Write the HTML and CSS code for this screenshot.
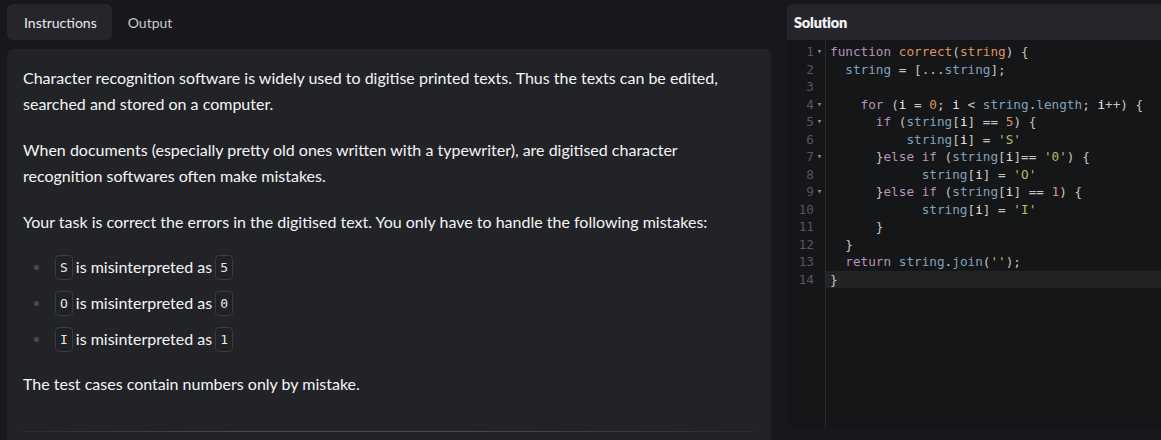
FILE: index.html
```html
<!DOCTYPE html>
<html>
<head>
<meta charset="utf-8">
<link rel="stylesheet" href="styles.css">
</head>
<body>
<div class="app">
  <section class="left">
    <nav class="tabs">
      <span class="tab active">Instructions</span>
      <span class="tab">Output</span>
    </nav>
    <article class="panel">
      <p>Character recognition software is widely used to digitise printed texts. Thus the texts can be edited, searched and stored on a computer.</p>
      <p>When documents (especially pretty old ones written with a typewriter), are digitised character recognition softwares often make mistakes.</p>
      <p>Your task is correct the errors in the digitised text. You only have to handle the following mistakes:</p>
      <ul>
        <li><code>S</code> is misinterpreted as <code>5</code></li>
        <li><code>O</code> is misinterpreted as <code>0</code></li>
        <li><code>I</code> is misinterpreted as <code>1</code></li>
      </ul>
      <p>The test cases contain numbers only by mistake.</p>
      <div class="rule"></div>
    </article>
  </section>
  <section class="right">
    <header class="sol-head">Solution</header>
    <div class="editor">
      <div class="gutter">
        <div class="ln">1<i class="fold">▾</i></div>
        <div class="ln">2<i></i></div>
        <div class="ln">3<i></i></div>
        <div class="ln">4<i class="fold">▾</i></div>
        <div class="ln">5<i class="fold">▾</i></div>
        <div class="ln">6<i></i></div>
        <div class="ln">7<i class="fold">▾</i></div>
        <div class="ln">8<i></i></div>
        <div class="ln">9<i class="fold">▾</i></div>
        <div class="ln">10<i></i></div>
        <div class="ln">11<i></i></div>
        <div class="ln">12<i></i></div>
        <div class="ln">13<i></i></div>
        <div class="ln">14<i></i></div>
      </div>
      <div class="code">
        <div class="cl"><span class="kw">function</span> <span class="fn">correct</span><span class="p">(</span><span class="fn">string</span><span class="p">) {</span></div>
        <div class="cl">  <span class="v">string</span> <span class="p">= [...</span><span class="v">string</span><span class="p">];</span></div>
        <div class="cl"> </div>
        <div class="cl">    <span class="kw">for</span> <span class="p">(</span><span class="i">i</span> <span class="p">=</span> <span class="n">0</span><span class="p">;</span> <span class="i">i</span> <span class="p">&lt;</span> <span class="v">string</span><span class="p">.</span><span class="v">length</span><span class="p">;</span> <span class="i">i</span><span class="p">++) {</span></div>
        <div class="cl">      <span class="kw">if</span> <span class="p">(</span><span class="v">string</span><span class="p">[</span><span class="i">i</span><span class="p">] ==</span> <span class="n">5</span><span class="p">) {</span></div>
        <div class="cl">          <span class="v">string</span><span class="p">[</span><span class="i">i</span><span class="p">] =</span> <span class="s">'S'</span></div>
        <div class="cl">      <span class="p">}</span><span class="kw">else</span> <span class="kw">if</span> <span class="p">(</span><span class="v">string</span><span class="p">[</span><span class="i">i</span><span class="p">]==</span> <span class="s">'0'</span><span class="p">) {</span></div>
        <div class="cl">            <span class="v">string</span><span class="p">[</span><span class="i">i</span><span class="p">] =</span> <span class="s">'O'</span></div>
        <div class="cl">      <span class="p">}</span><span class="kw">else</span> <span class="kw">if</span> <span class="p">(</span><span class="v">string</span><span class="p">[</span><span class="i">i</span><span class="p">] ==</span> <span class="n">1</span><span class="p">) {</span></div>
        <div class="cl">            <span class="v">string</span><span class="p">[</span><span class="i">i</span><span class="p">] =</span> <span class="s">'I'</span></div>
        <div class="cl">      <span class="p">}</span></div>
        <div class="cl">  <span class="p">}</span></div>
        <div class="cl">  <span class="kw">return</span> <span class="v">string</span><span class="p">.</span><span class="v">join</span><span class="p">(</span><span class="s">''</span><span class="p">);</span></div>
        <div class="cl active"><span class="p">}</span></div>
      </div>
    </div>
  </section>
</div>
</body>
</html>
```

FILE: styles.css
```css
html, body {
  margin: 0;
  padding: 0;
  background: #17181c;
  height: 100%;
  overflow: hidden;
}

.app {
  display: flex;
  height: 440px;
  font-family: Lato, "Noto Sans", sans-serif;
}

.left {
  width: 764px;
  margin-left: 7px;
  display: flex;
  flex-direction: column;
}

.tabs {
  display: flex;
  padding-top: 4px;
  height: 36px;
  align-items: stretch;
  flex: none;
}

.tab {
  display: flex;
  align-items: center;
  padding: 0 16px;
  font-size: 14px;
  color: #c9cacd;
  border-radius: 6px;
}

.tab.active {
  background: #25262b;
  color: #eaeaec;
  padding: 0 15px 0 17px;
}

.panel {
  margin-top: 9px;
  background: #222327;
  border-radius: 6px 6px 0 0;
  flex: 1;
  padding: 16px 16px 0 16px;
  color: #f4f4f6;
  font-size: 16px;
  line-height: 26px;
  position: relative;
}

.panel p {
  margin: 0 0 20px 0;
}

.panel ul {
  margin: 1px 0 20px 0;
  padding: 0 0 0 32px;
  list-style: none;
}

.panel li {
  position: relative;
  height: 24px;
  line-height: 24px;
  margin-bottom: 12px;
  display: flex;
  align-items: center;
}

.panel li::before {
  content: "";
  position: absolute;
  left: -21px;
  top: 10px;
  width: 5px;
  height: 5px;
  border-radius: 50%;
  background: #4a4b50;
}

.panel code {
  font-family: "DejaVu Sans Mono", monospace;
  font-size: 13px;
  line-height: 21px;
  border: 1px solid #3a3b40;
  border-radius: 4px;
  padding: 1px 4px;
  margin: 0 3px 0 0;
  background: #202125;
  color: #e8e8ea;
}

.panel li code:last-child {
  margin: 0 0 0 3px;
}

.rule {
  position: absolute;
  left: 16px;
  right: 16px;
  top: 382px;
  height: 1px;
  background: linear-gradient(90deg, rgba(80,81,86,0.2), #4a4b50 30%, #4a4b50 60%, rgba(80,81,86,0.2));
}

.right {
  margin-left: 16px;
  margin-top: 4px;
  width: 374px;
  height: 424px;
  display: flex;
  flex-direction: column;
}

.sol-head {
  flex: none;
  height: 36px;
  background: #25262b;
  border-radius: 6px 0 0 0;
  display: flex;
  align-items: center;
  padding-left: 7px;
  font-weight: 800;
  font-size: 14.5px;
  color: #f4f4f6;
  letter-spacing: -0.2px;
}

.editor {
  flex: 1;
  display: flex;
  background: #151617;
  font-family: "DejaVu Sans Mono", monospace;
  font-size: 12.7px;
  line-height: 17.5px;
  min-height: 0;
}

.gutter {
  width: 38px;
  border-right: 1px solid #2a2b2d;
  color: #55575d;
  padding-top: 3px;
}

.ln {
  display: flex;
  justify-content: flex-end;
  height: 17.5px;
}

.ln i {
  display: inline-block;
  width: 11px;
  font-style: normal;
  font-size: 9px;
  text-align: center;
  color: #8a8c92;
}

.code {
  flex: 1;
  color: #c5c8c6;
  padding-top: 3px;
}

.cl {
  white-space: pre;
  height: 17.5px;
  padding-left: 4px;
}

.cl.active {
  background: #222325;
}

.kw { color: #b294bb; }
.fn { color: #de935f; }
.v { color: #81a2be; }
.i { color: #f0f0f0; }
.n { color: #de935f; }
.s { color: #b5bd68; }
.p { color: #c5c8c6; }
```
